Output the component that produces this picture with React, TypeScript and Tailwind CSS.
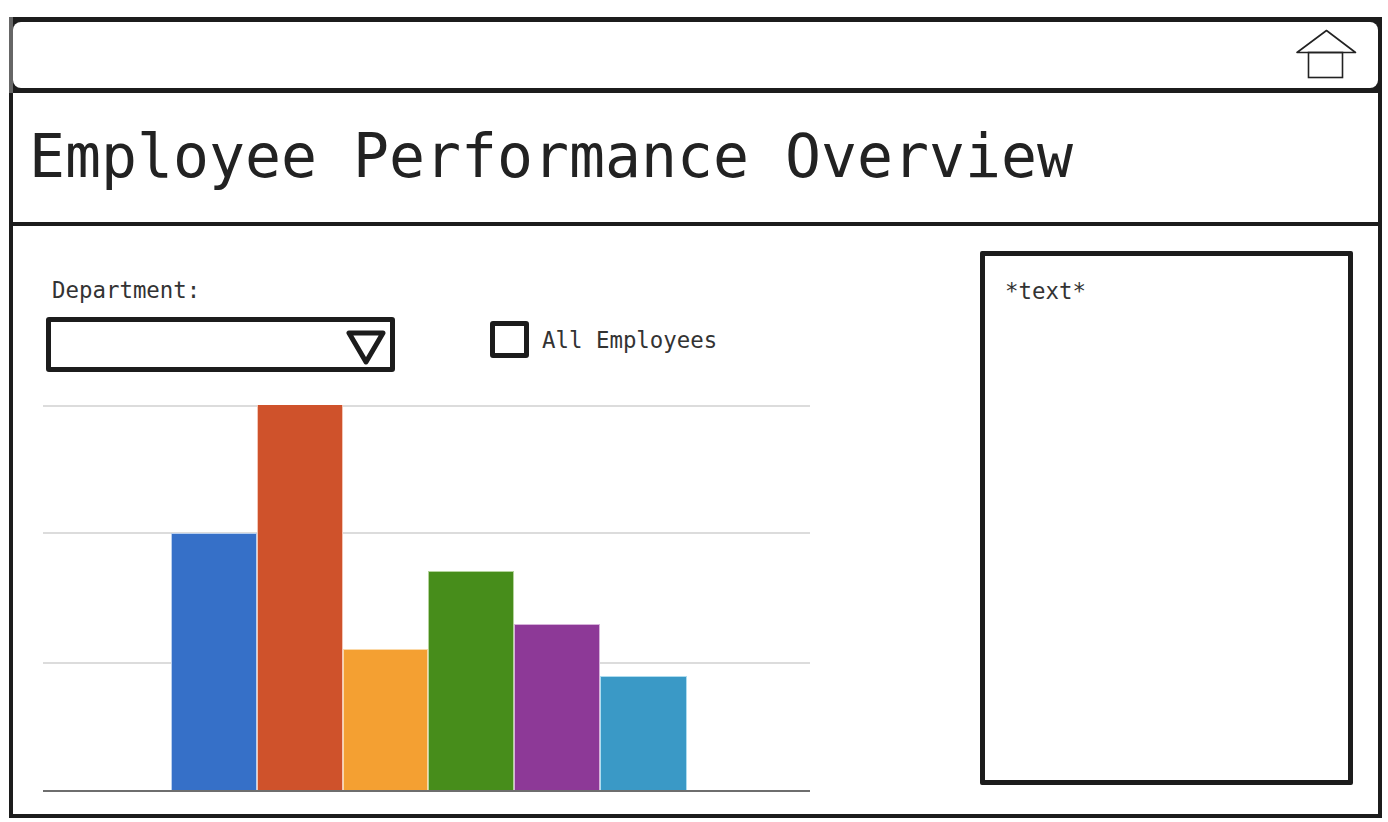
export default function App() {
  const bars = [
    { x: 172, w: 84, top: 534, c: "#3670c8", e: "#b9cfee" },
    { x: 258, w: 84, top: 405, c: "#cf522b", e: "#f3c6b6" },
    { x: 344, w: 83, top: 650, c: "#f4a032", e: "#fbd9a8" },
    { x: 429, w: 84, top: 572, c: "#478d1b", e: "#b4d39c" },
    { x: 515, w: 84, top: 625, c: "#8d3997", e: "#d6b2da" },
    { x: 601, w: 85, top: 677, c: "#3a99c6", e: "#aedcef" },
  ];
  return (
    <div className="w-[1388px] h-[822px] bg-white pt-[17px] pl-[9px] pr-[6px] pb-[4px] overflow-hidden font-['DejaVu_Sans_Mono','Liberation_Mono',monospace] text-[#222]">
      <div className="h-full flex flex-col">
        <header className="h-[76px] shrink-0 flex bg-[#1c1c1c] py-[5px] pr-[4px] border-l-[4px] border-l-[#666]">
          <div className="flex-1 bg-white rounded-[8px] flex items-center justify-end pr-[20px]">
            <svg width="62" height="52" viewBox="0 0 62 52" className="mt-[-1px]" aria-hidden="true">
              <path d="M1 23.5 L30.5 1.5 L59.5 23.5 Z" fill="none" stroke="#222" strokeWidth="1.6" strokeLinejoin="round" />
              <rect x="12.5" y="23.5" width="34" height="25" fill="none" stroke="#222" strokeWidth="1.6" />
            </svg>
          </div>
        </header>
        <div className="flex-1 flex flex-col border-x-[4px] border-b-[4px] border-[#1c1c1c]">
          <div className="h-[133px] shrink-0 flex items-center pl-[16px] pb-[1px] border-b-[4px] border-[#1c1c1c]">
            <h1 className="text-[59.8px] leading-none font-normal whitespace-nowrap">Employee Performance Overview</h1>
          </div>
          <div className="flex-1 flex justify-between pl-[30px] pr-[25px] pt-[25px]">
            <div className="w-[767px] flex flex-col">
              <div className="pl-[9px] pt-[26px] text-[22.4px] leading-[26px] text-[#333] whitespace-nowrap">Department:</div>
              <div className="flex items-center mt-[14px] ml-[3px]">
                <div className="w-[349px] h-[55px] border-[5px] border-[#1c1c1c] rounded-[3px] flex items-center justify-end pr-[4px]">
                  <svg width="40" height="36" viewBox="0 0 40 36" aria-hidden="true" className="mt-[4px]">
                    <path d="M3 4 H37 L20 33 Z" fill="none" stroke="#1c1c1c" strokeWidth="5" strokeLinejoin="round" />
                  </svg>
                </div>
                <div className="ml-[95px] mt-[-11px] w-[39px] h-[37px] border-[5px] border-[#1c1c1c] rounded-[3px]" />
                <span className="ml-[13px] mt-[-10px] text-[22.4px] leading-[26px] text-[#333] whitespace-nowrap">All Employees</span>
              </div>
              <svg width="767" height="388" viewBox="43 405 767 388" className="mt-[33px] block" aria-hidden="true">
                <rect x="43" y="405" width="767" height="2" fill="#dcdcdc" />
                <rect x="43" y="532" width="767" height="2" fill="#dcdcdc" />
                <rect x="43" y="662" width="767" height="2" fill="#dcdcdc" />
                {bars.map((b) => (
                  <g key={b.x}>
                    <rect x={b.x - 1} y={b.top - 1} width={b.w + 2} height={792 - b.top} fill={b.e} />
                    <rect x={b.x} y={b.top} width={b.w} height={791 - b.top} fill={b.c} />
                  </g>
                ))}
                <rect x="43" y="790" width="767" height="2" fill="#6e6e6e" />
              </svg>
            </div>
            <aside className="w-[373px] h-[534px] border-[5px] border-[#1c1c1c] rounded-[2px] pl-[20px] pt-[22px] text-[22.4px] leading-[26px] text-[#333]">*text*</aside>
          </div>
        </div>
      </div>
    </div>
  );
}
